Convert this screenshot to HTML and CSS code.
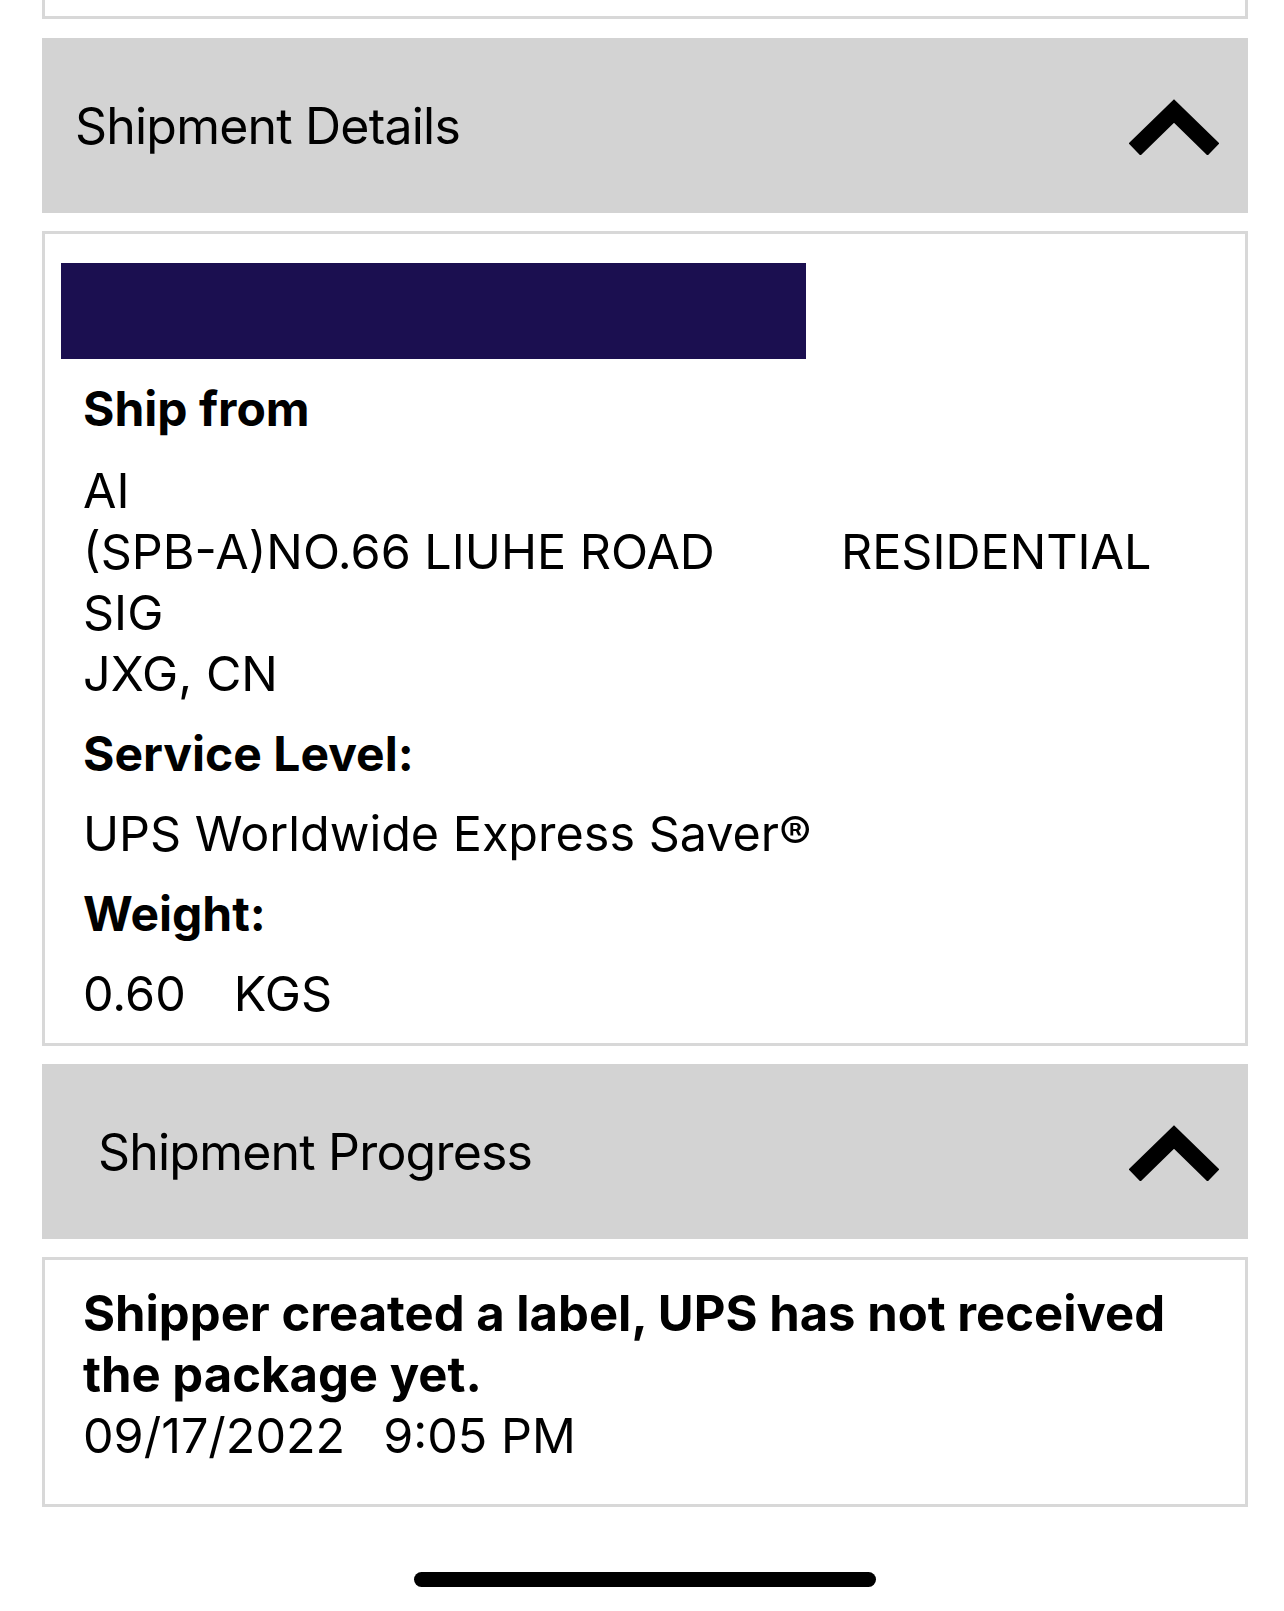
FILE: index.html
```html
<!DOCTYPE html>
<html>
<head>
  <title>Shipment</title>
  <link rel="stylesheet" href="styles.css">
</head>
<body>
  <div class="page">
    <div class="card card-cut"></div>

    <div class="section-head">
      <span class="section-title">Shipment Details</span>
      <svg class="chevron" width="90" height="56" viewBox="0 0 90 56">
        <path d="M5.5 50.5 L45 12 L84.5 50.5" fill="none" stroke="#000" stroke-width="17" stroke-linejoin="miter" stroke-miterlimit="4"/>
      </svg>
    </div>

    <div class="card details">
      <div class="redacted"></div>
      <div class="info">
        <div class="label">Ship from</div>
        <div class="address">
          <div>AI</div>
          <div class="addr-row">
            <span class="street">(SPB-A)NO.66 LIUHE ROAD</span>
            <span>RESIDENTIAL</span>
          </div>
          <div>SIG</div>
          <div>JXG, CN</div>
        </div>
        <div class="label">Service Level:</div>
        <div class="value">UPS Worldwide Express Saver®</div>
        <div class="label">Weight:</div>
        <div class="value"><span class="num">0.60</span>KGS</div>
      </div>
    </div>

    <div class="section-head">
      <span class="section-title indent">Shipment Progress</span>
      <svg class="chevron" width="90" height="56" viewBox="0 0 90 56">
        <path d="M5.5 50.5 L45 12 L84.5 50.5" fill="none" stroke="#000" stroke-width="17" stroke-linejoin="miter" stroke-miterlimit="4"/>
      </svg>
    </div>

    <div class="card progress">
      <div class="status">Shipper created a label, UPS has not received the package yet.</div>
      <div class="stamp"><span class="date">09/17/2022</span>9:05 PM</div>
    </div>
  </div>

  <div class="home-bar"></div>
</body>
</html>
```

FILE: styles.css
```css
body {
  margin: 0;
  background: #fff;
  color: #000;
  font-family: Inter, "Liberation Sans", Arial, sans-serif;
  height: 1611px;
  overflow: hidden;
  display: flex;
  flex-direction: column;
}

.page {
  padding: 0 36px 0 42px;
  display: flex;
  flex-direction: column;
  gap: 18px;
}

.card {
  border: 3px solid #d8d8d8;
  background: #fff;
}

/* the card above is scrolled off, only its bottom edge shows */
.card-cut {
  border-top: none;
  height: 16px;
  margin-bottom: 1px;
}

.section-head {
  height: 175px;
  background: #d3d3d3;
  display: flex;
  align-items: center;
  justify-content: space-between;
}

.section-title {
  font-size: 50px;
  line-height: 61px;
  padding-left: 33px;
  margin-top: 2px;
  letter-spacing: -0.8px;
}

.section-title.indent {
  padding-left: 56px;
}

.chevron {
  display: block;
  margin-right: 29px;
  margin-top: 2px;
}

.details {
  padding: 29px 16px 19px;
}

.redacted {
  width: 745px;
  height: 96px;
  background: #1b0f50;
}

.info {
  padding-left: 22px;
  font-size: 48.5px;
  line-height: 61px;
}

.label {
  font-size: 48px;
  font-weight: 700;
  margin-top: 19px;
}

.address {
  margin-top: 21px;
}

.value {
  margin-top: 19px;
}

.addr-row {
  display: flex;
}

.street {
  width: 758px;
}

.num {
  margin-right: 48px;
}

.progress {
  padding: 23px 38px 38px;
  font-size: 48.5px;
  line-height: 61px;
}

.status {
  font-size: 49px;
  font-weight: 700;
}

.date {
  margin-right: 38px;
}

.home-bar {
  width: 462px;
  height: 15px;
  border-radius: 8px;
  background: #000;
  margin: 65px auto 0 414px;
}
```
